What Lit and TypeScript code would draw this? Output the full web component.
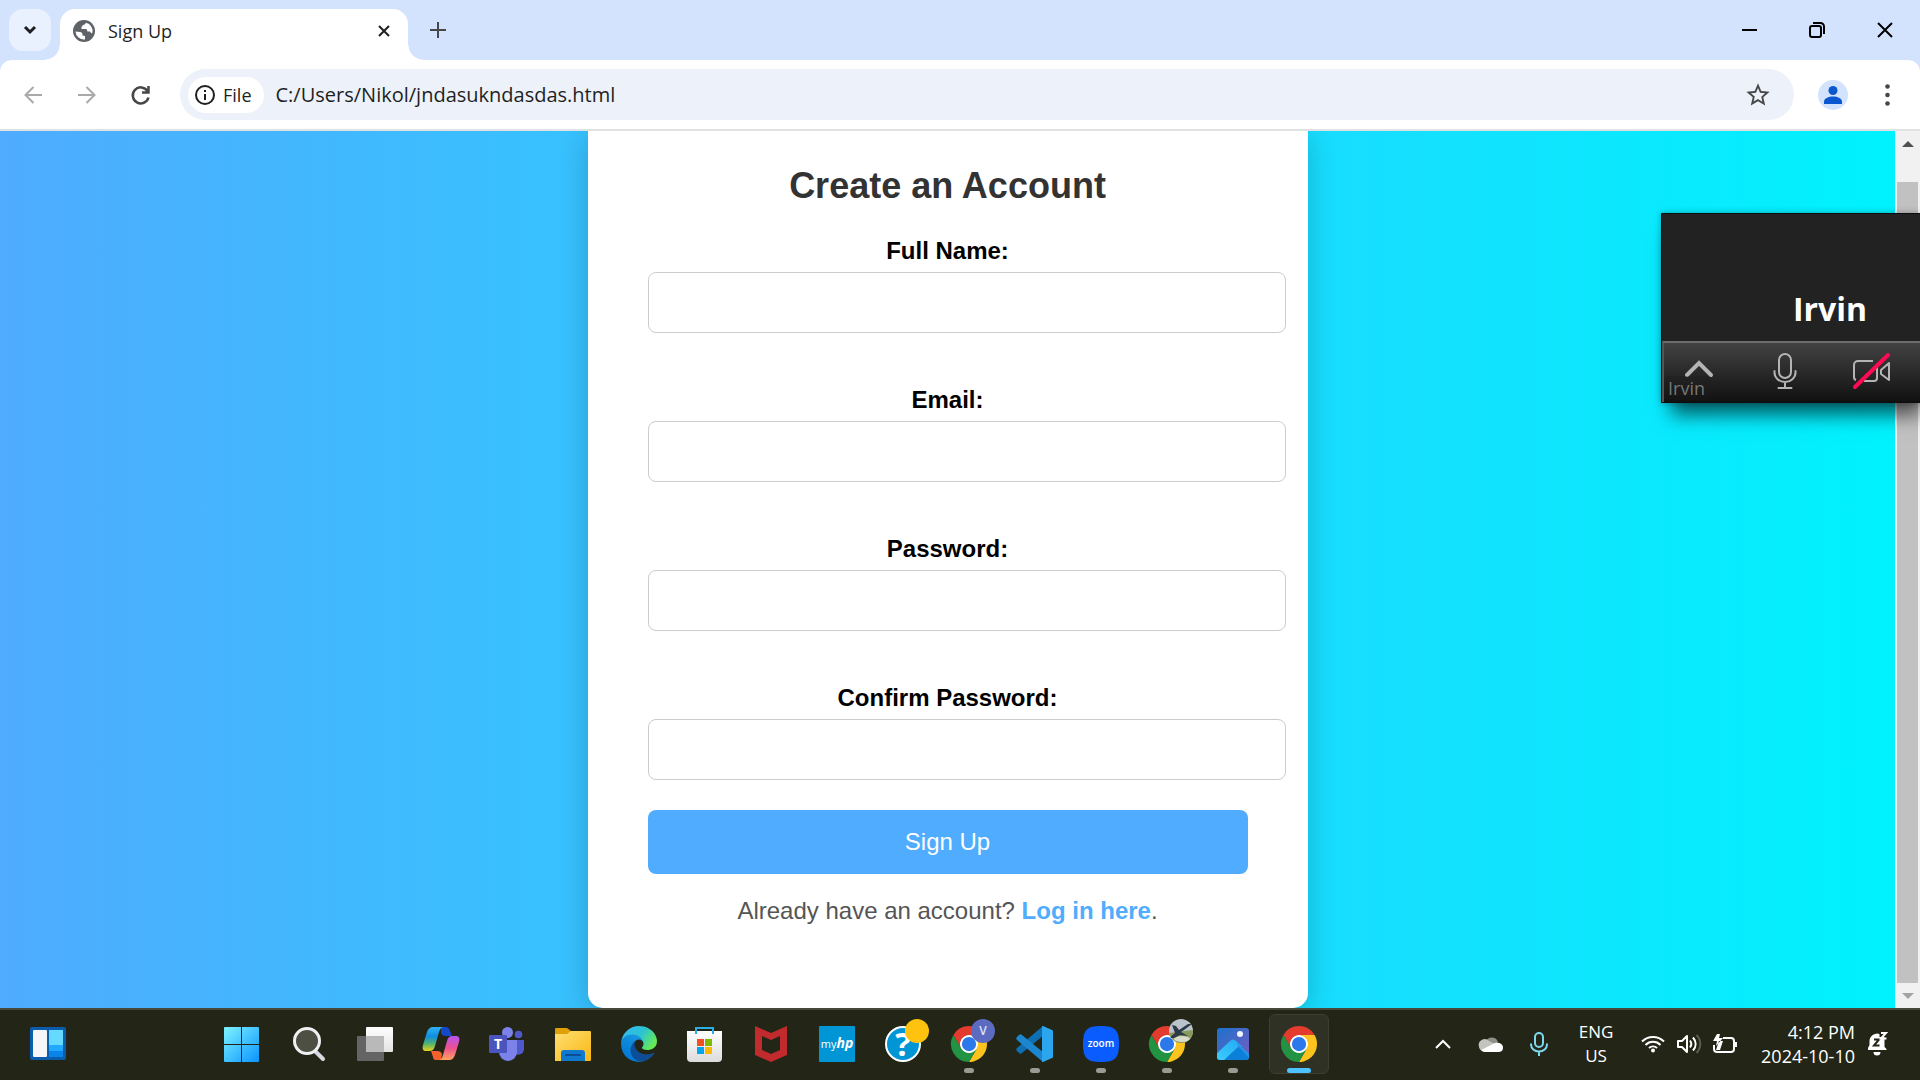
import { LitElement, html, svg, css, nothing, TemplateResult, SVGTemplateResult } from "lit";
import { customElement, property } from "lit/decorators.js";

const resetStyles = css`
  :host,
  *,
  *::before,
  *::after {
    box-sizing: border-box;
  }
  button {
    margin: 0;
    padding: 0;
    border: 0;
    background: none;
    color: inherit;
    font: inherit;
    display: flex;
    align-items: center;
    justify-content: center;
  }
  svg {
    display: block;
    flex: none;
    overflow: visible;
  }
`;

/* ---------- Browser frame: tab strip and toolbar ---------- */

@customElement("browser-frame")
export class BrowserFrame extends LitElement {
  @property() tabTitle = "";
  @property() address = "";

  static styles = [
    resetStyles,
    css`
      :host {
        display: block;
        background: #d3e3fd;
        color: #1f1f1f;
        font-family: "Open Sans", "Noto Sans", sans-serif;
        border-bottom: 2px solid #dfe1e2;
      }
      .strip {
        display: flex;
        height: 60px;
        padding: 9px 1px 0 9px;
      }
      .search-tabs {
        width: 42px;
        height: 42px;
        border-radius: 14px;
        background: #e9f0fe;
      }
      .tab {
        position: relative;
        display: flex;
        align-items: center;
        gap: 13px;
        width: 348px;
        margin-left: 9px;
        padding: 0 14px 8px 13px;
        border-radius: 15px 15px 0 0;
        background: #fff;
        font-size: 18px;
      }
      .tab::before,
      .tab::after {
        content: "";
        position: absolute;
        bottom: 0;
        width: 15px;
        height: 15px;
      }
      .tab::before {
        right: 100%;
        background: radial-gradient(circle at 0 0, transparent 14px, #fff 15px);
      }
      .tab::after {
        left: 100%;
        background: radial-gradient(circle at 100% 0, transparent 14px, #fff 15px);
      }
      .title {
        flex: 1;
        line-height: 26px;
      }
      .new-tab {
        width: 42px;
        height: 42px;
        margin-left: 9px;
      }
      .window {
        display: flex;
        margin: -9px 0 0 auto;
      }
      .window button {
        width: 68px;
        height: 59px;
      }
      .toolbar {
        display: flex;
        align-items: center;
        height: 69px;
        padding: 0 6px;
        border-radius: 12px 12px 0 0;
        background: #fff;
      }
      .nav {
        width: 54px;
        height: 42px;
        color: #474747;
      }
      .nav:disabled {
        color: #a9a9a9;
      }
      .omnibox {
        flex: 1;
        display: flex;
        align-items: center;
        height: 51px;
        margin: 0 12px;
        padding: 0 22px 0 8px;
        border-radius: 26px;
        background: #ecf1fa;
      }
      .chip {
        height: 36px;
        padding: 0 12px 0 7px;
        gap: 8px;
        border-radius: 18px;
        background: #fff;
        font-size: 18px;
        font-weight: 500;
      }
      .address {
        flex: 1;
        min-width: 0;
        height: 36px;
        margin-left: 12px;
        padding: 0;
        border: 0;
        outline: 0;
        background: none;
        color: #1f1f1f;
        font: 20px "Open Sans", "Noto Sans", sans-serif;
      }
      .profile {
        width: 54px;
        height: 42px;
      }
    `,
  ];

  render() {
    return html`
      <div class="strip">
        <button class="search-tabs" aria-label="Search tabs">
          <svg width="14" height="10" viewBox="0 0 14 10" fill="none" stroke="#1f1f1f" stroke-width="3">
            <path d="M2 2l5 5 5-5" />
          </svg>
        </button>
        <div class="tab">
          <svg width="22" height="22" viewBox="0 0 22 22">
            <circle cx="11" cy="11" r="11" fill="#5f6368" />
            <path
              d="M2.500 11.500L7 12c1.500 0 2.500 1 2.500 2.500v1l2.500.5v3.500a8.500 8.500 0 0 1-9.500-8z"
              fill="#fff"
            />
            <path
              d="M13 2.700c-.5 1.300-1.500 2-3 2.300L8.500 7v2h5l1 2.500H17l1.500 2 .8-.5A8.500 8.500 0 0 0 13 2.700z"
              fill="#fff"
            />
          </svg>
          <span class="title">${this.tabTitle}</span>
          <button aria-label="Close tab">
            <svg width="20" height="14" viewBox="0 0 20 14" fill="none" stroke="#1f1f1f" stroke-width="2">
              <path d="M5 2l10 10M15 2L5 12" />
            </svg>
          </button>
        </div>
        <button class="new-tab" aria-label="New tab">
          <svg width="16" height="16" viewBox="0 0 16 16" fill="none" stroke="#474747" stroke-width="2">
            <path d="M8 0v16M0 8h16" />
          </svg>
        </button>
        <div class="window">
          <button aria-label="Minimize">
            <svg width="15" height="2" viewBox="0 0 15 2"><path d="M0 0h15v2H0z" /></svg>
          </button>
          <button aria-label="Restore">
            <svg width="16" height="16" viewBox="0 0 16 16" fill="none" stroke="#000" stroke-width="2">
              <rect x="1" y="4" width="11" height="11" rx="2" />
              <path d="M4 1h7.500A3.500 3.500 0 0 1 15 4.500V12" />
            </svg>
          </button>
          <button aria-label="Close">
            <svg width="16" height="16" viewBox="0 0 16 16" fill="none" stroke="#000" stroke-width="2">
              <path d="M1 1l14 14M15 1L1 15" />
            </svg>
          </button>
        </div>
      </div>
      <div class="toolbar">
        <button class="nav" aria-label="Back" disabled>
          <svg width="18" height="18" viewBox="0 0 18 18" fill="none" stroke="currentColor" stroke-width="2">
            <path d="M18 9H2M9.500 1L1.500 9l8 8" />
          </svg>
        </button>
        <button class="nav" aria-label="Forward" disabled>
          <svg width="18" height="18" viewBox="0 0 18 18" fill="none" stroke="currentColor" stroke-width="2">
            <path d="M0 9h16M8.500 1l8 8-8 8" />
          </svg>
        </button>
        <button class="nav" aria-label="Reload">
          <svg width="20" height="20" viewBox="0 0 20 20" fill="none" stroke="currentColor" stroke-width="2.500">
            <path d="M17.500 12.500A8 8 0 1 1 16.500 6M17.500 1v6.500H11" />
          </svg>
        </button>
        <div class="omnibox">
          <button class="chip">
            <svg width="20" height="20" viewBox="0 0 20 20" fill="none" stroke="#1f1f1f" stroke-width="2">
              <circle cx="10" cy="10" r="9" />
              <path d="M10 9v6M10 5v2" />
            </svg>
            File
          </button>
          <input class="address" type="text" aria-label="Address" .value=${this.address} spellcheck="false" />
          <button aria-label="Bookmark this page">
            <svg width="28" height="28" viewBox="0 0 24 24" fill="#474747">
              <path
                d="M22 9.240l-7.190-.620L12 2 9.190 8.630 2 9.240l5.460 4.730L5.820 21 12 17.270 18.180 21l-1.630-7.030L22 9.240zM12 15.400l-3.760 2.270 1-4.280-3.320-2.880 4.380-.380L12 6.100l1.710 4.040 4.380.380-3.320 2.880 1 4.280L12 15.400z"
              />
            </svg>
          </button>
        </div>
        <button class="profile" aria-label="Profile">
          <svg width="30" height="30" viewBox="0 0 30 30">
            <circle cx="15" cy="15" r="15" fill="#d3e3fd" />
            <circle cx="15" cy="10.500" r="4.500" fill="#0b57d0" />
            <path d="M6 24v-2.500c0-3 4.500-5 9-5s9 2 9 5V24z" fill="#0b57d0" />
          </svg>
        </button>
        <button class="nav" aria-label="Menu">
          <svg width="5" height="22" viewBox="0 0 5 22" fill="#474747">
            <circle cx="2.500" cy="2.500" r="2.300" />
            <circle cx="2.500" cy="11" r="2.300" />
            <circle cx="2.500" cy="19.500" r="2.300" />
          </svg>
        </button>
      </div>
    `;
  }
}

/* ---------- Web page: the sign-up form ---------- */

interface Field {
  id: string;
  label: string;
  type: string;
}

const FIELDS: Field[] = [
  { id: "full-name", label: "Full Name:", type: "text" },
  { id: "email", label: "Email:", type: "email" },
  { id: "password", label: "Password:", type: "password" },
  { id: "confirm-password", label: "Confirm Password:", type: "password" },
];

@customElement("sign-up-page")
export class SignUpPage extends LitElement {
  static styles = [
    resetStyles,
    css`
      :host {
        display: flex;
        font-family: "Liberation Sans", Arial, sans-serif;
        font-size: 24px;
        line-height: 28px;
      }
      .view {
        flex: 1;
        display: flex;
        justify-content: center;
        overflow: hidden;
        background: linear-gradient(to right, #4facfe, #00f2fe);
      }
      .card {
        width: 720px;
        max-width: 100%;
        padding: 34px 60px 60px;
        border-radius: 0 0 15px 15px;
        background: #fff;
        box-shadow: 0 6px 30px rgba(0, 0, 0, 0.2);
        text-align: center;
      }
      h1 {
        margin: 0 0 30px;
        color: #333;
        font-size: 36px;
        line-height: 42px;
      }
      .fields {
        display: grid;
        gap: 53px;
      }
      .field {
        display: grid;
        gap: 7px;
      }
      label {
        color: #000;
        font-weight: bold;
      }
      .field input {
        width: calc(100% + 38px);
        height: 61px;
        padding: 0 18px;
        border: 1px solid #ccc;
        border-radius: 8px;
        outline: 0;
        background: #fff;
        font: inherit;
      }
      .submit {
        width: 100%;
        height: 64px;
        margin: 30px 0 23px;
        border-radius: 8px;
        background: #4facfe;
        color: #fff;
      }
      p {
        margin: 0;
        color: #555;
      }
      a {
        color: #4facfe;
        font-weight: bold;
        text-decoration: none;
      }
      .scrollbar {
        display: flex;
        flex-direction: column;
        align-items: center;
        width: 25px;
        background: #f1f1f1;
      }
      .scrollbar button {
        width: 25px;
        height: 25px;
      }
      .thumb {
        flex: 1;
        width: 21px;
        margin-top: 26px;
        background: #c1c1c1;
      }
    `,
  ];

  private renderField(f: Field): TemplateResult {
    return html`
      <div class="field">
        <label for=${f.id}>${f.label}</label>
        <input id=${f.id} type=${f.type} />
      </div>
    `;
  }

  render() {
    return html`
      <div class="view">
        <form class="card" @submit=${(e: Event) => e.preventDefault()}>
          <h1>Create an Account</h1>
          <div class="fields">${FIELDS.map((f) => this.renderField(f))}</div>
          <button class="submit" type="submit">Sign Up</button>
          <p>Already have an account? <a href="#login">Log in here</a>.</p>
        </form>
      </div>
      <div class="scrollbar">
        <button aria-label="Scroll up">
          <svg width="12" height="6" viewBox="0 0 12 6" fill="#505050"><path d="M0 6L6 0l6 6z" /></svg>
        </button>
        <div class="thumb"></div>
        <button aria-label="Scroll down">
          <svg width="12" height="6" viewBox="0 0 12 6" fill="#a3a3a3"><path d="M0 0l6 6 6-6z" /></svg>
        </button>
      </div>
    `;
  }
}

/* ---------- Floating call window ---------- */

@customElement("call-window")
export class CallWindow extends LitElement {
  @property() name = "";

  static styles = [
    resetStyles,
    css`
      :host {
        display: flex;
        flex-direction: column;
        width: 259px;
        height: 190px;
        background: #222;
        border: solid rgba(0, 0, 0, 0.6);
        border-width: 1px 0 1px 1px;
        box-shadow: 6px 16px 18px -4px rgba(0, 0, 0, 0.6), 0 0 6px rgba(0, 0, 0, 0.3);
        font-family: "Open Sans", "Noto Sans", sans-serif;
      }
      .speaker {
        flex: 1;
        display: flex;
        align-items: flex-end;
        justify-content: center;
        padding: 0 0 8px 78px;
        color: #fff;
        font-size: 32px;
        font-weight: bold;
        line-height: 48px;
      }
      .controls {
        position: relative;
        display: flex;
        align-items: center;
        gap: 38px;
        height: 61px;
        padding: 0 0 4px 11px;
        border-top: 2px solid #6c6c6c;
        border-left: 2px solid #555;
        background: linear-gradient(#424242, #101010);
        color: #b4b4b4;
      }
      .controls button {
        width: 48px;
      }
      .caption {
        position: absolute;
        left: 0;
        bottom: 2px;
        padding: 0 6px 0 4px;
        border-radius: 4px;
        background: rgba(30, 30, 30, 0.3);
        color: #777;
        font-size: 18px;
        line-height: 24px;
      }
    `,
  ];

  render() {
    return html`
      <div class="speaker">${this.name}</div>
      <div class="controls">
        <button aria-label="More">
          <svg width="28" height="20" viewBox="0 0 28 20" fill="none" stroke="currentColor" stroke-width="4" stroke-linecap="round">
            <path d="M2 14L14 2l12 12" />
          </svg>
        </button>
        <button aria-label="Mute">
          <svg width="24" height="36" viewBox="0 0 24 36" fill="none" stroke="currentColor" stroke-width="2" stroke-linecap="round">
            <rect x="6" y="1" width="12" height="24" rx="6" />
            <path d="M1.500 18v1.500a10.500 9.500 0 0 0 21 0V18M12 29v6M5.500 35h13" />
          </svg>
        </button>
        <button aria-label="Start video">
          <svg width="38" height="36" viewBox="0 0 38 36" fill="none" stroke="currentColor" stroke-width="2" stroke-linejoin="round">
            <path d="M4 27a3 3 0 0 1-2-3V12a4 4 0 0 1 4-4h15M25 14v11a3 3 0 0 1-3 3H12M37 10v17l-8-6v-4z" />
            <path d="M3 34L36 2" stroke="#ff0a54" stroke-width="4" stroke-linecap="round" />
          </svg>
        </button>
        <span class="caption">${this.name}</span>
      </div>
    `;
  }
}

/* ---------- Taskbar ---------- */

/* Every app icon is drawn on a 48 by 48 grid. */

const chromeLogo = svg`
  <g transform="translate(6 6) scale(.75)">
    <circle cx="24" cy="24" r="12.500" fill="#fff" />
    <path fill="#e33b2e" d="M24 12h20.780A24 24 0 0 0 3.210 12L13.610 30A12 12 0 0 1 24 12z" />
    <path fill="#fcc31e" d="M34.390 30L24 48A24 24 0 0 0 44.780 12H24A12 12 0 0 1 34.390 30z" />
    <path fill="#229342" d="M13.610 30L3.210 12A24 24 0 0 0 24 48l10.390-18A12 12 0 0 1 13.610 30z" />
    <circle cx="24" cy="24" r="9.500" fill="#2b78ea" />
  </g>`;

interface App {
  name: string;
  icon: SVGTemplateResult;
  state?: "running" | "active";
}

const WIDGETS = svg`
  <rect x="6" y="7" width="36" height="33" rx="2" fill="#0b5cad" />
  <rect x="9" y="10" width="14" height="27" rx="1" fill="#f6f6f6" />
  <rect x="25" y="10" width="14" height="15" fill="#66d9ff" />
  <rect x="25" y="25" width="14" height="6" fill="#21a9ff" />
  <rect x="25" y="31" width="14" height="6" fill="#0a84ea" />`;

const APPS: App[] = [
  {
    name: "Start",
    icon: svg`
      <linearGradient id="win" gradientUnits="userSpaceOnUse" x1="5" y1="7" x2="40" y2="42">
        <stop offset="0" stop-color="#7df3ff" /><stop offset="1" stop-color="#0a94ff" />
      </linearGradient>
      <path fill="url(#win)" d="M6 7h16v17H5V8a1 1 0 0 1 1-1zM23 7h16a1 1 0 0 1 1 1v16H23zM5 25h17v17H6a1 1 0 0 1-1-1zM23 25h17v16a1 1 0 0 1-1 1H23z" />`,
  },
  {
    name: "Search",
    icon: svg`
      <path d="M30 31l8 8" stroke="#d5d8de" stroke-width="4" stroke-linecap="round" />
      <circle cx="22" cy="21" r="12.500" fill="#4d4f42" stroke="#eef0f3" stroke-width="3" />`,
  },
  {
    name: "Task view",
    icon: svg`
      <linearGradient id="tv" x1="0" y1="0" x2="0" y2="1">
        <stop offset="0" stop-color="#fff" /><stop offset="1" stop-color="#e2e2e2" />
      </linearGradient>
      <rect x="6" y="16" width="27" height="25" rx="1" fill="#646464" />
      <rect x="15" y="7" width="27" height="25" rx="1" fill="url(#tv)" />
      <path d="M15 16h18v16H15z" fill="#b9b9b9" />`,
  },
  {
    name: "Copilot",
    icon: svg`
      <linearGradient id="cp1" x1="0" y1="0" x2="0" y2="1">
        <stop offset="0" stop-color="#2eb2f5" /><stop offset=".4" stop-color="#0f8de0" />
        <stop offset=".7" stop-color="#52b56c" /><stop offset="1" stop-color="#ecd11c" />
      </linearGradient>
      <linearGradient id="cp2" x1="0" y1="0" x2="0" y2="1">
        <stop offset="0" stop-color="#b455f0" /><stop offset=".5" stop-color="#ee5090" />
        <stop offset="1" stop-color="#ffa35e" />
      </linearGradient>
      <path d="M24 7h5c2 0 3 1 4 4l2 5h-6c-3 0-4-1-5-3z" fill="#1548c8" />
      <path d="M24 40h-5c-2 0-3-1-3-3l-2-6h6c3 0 4 1 5 3z" fill="#f4622c" />
      <path d="M16 7h11c-3 0-4 2-5 5l-4 14c-1 4-3 5-6 5H9c-3 0-4-2-3-6l4-13c1-3 3-5 6-5z" fill="url(#cp1)" />
      <path d="M32 40H21c3 0 4-2 5-5l4-14c1-4 3-5 6-5h3c3 0 4 2 3 6l-4 13c-1 3-3 5-6 5z" fill="url(#cp2)" />`,
  },
  {
    name: "Teams",
    icon: svg`
      <circle cx="35.500" cy="14.500" r="3.800" fill="#5059c9" />
      <path d="M32 20h9v9a6 6 0 0 1-9 5z" fill="#5059c9" />
      <circle cx="24.500" cy="12.500" r="5.500" fill="#7b83eb" />
      <path d="M16 20h18v12a9 9 0 0 1-18 0z" fill="#7b83eb" />
      <rect x="6" y="15" width="18" height="18" rx="1" fill="#4b53bc" />
      <text x="15" y="29" text-anchor="middle" font-size="14" font-weight="bold" fill="#fff">T</text>`,
  },
  {
    name: "File Explorer",
    icon: svg`
      <linearGradient id="fe" x1="0" y1="0" x2="1" y2="1">
        <stop offset="0" stop-color="#ffdf75" /><stop offset="1" stop-color="#f8b711" />
      </linearGradient>
      <path d="M6 9a1 1 0 0 1 1-1h11l4 3v6H6z" fill="#e0a008" />
      <path d="M6 14h12l4-3h19a1 1 0 0 1 1 1v28a1 1 0 0 1-1 1H6z" fill="url(#fe)" />
      <path d="M12 41v-8a3 3 0 0 1 3-3h18a3 3 0 0 1 3 3v8z" fill="#0f78cf" />
      <path d="M17 35h14" stroke="#0a4f96" stroke-width="2" stroke-linecap="round" />`,
  },
  {
    name: "Edge",
    icon: svg`
      <linearGradient id="ed1" x1="0" y1="0" x2="1" y2="0">
        <stop offset="0" stop-color="#0a4f9c" /><stop offset="1" stop-color="#124c8c" />
      </linearGradient>
      <linearGradient id="ed2" x1=".8" y1="0" x2=".3" y2="1">
        <stop offset="0" stop-color="#1b9de2" /><stop offset=".6" stop-color="#0a82d8" />
        <stop offset="1" stop-color="#0078d4" />
      </linearGradient>
      <linearGradient id="ed3" x1="0" y1=".2" x2="1" y2=".7">
        <stop offset="0" stop-color="#35b8f1" /><stop offset=".5" stop-color="#2bc3d2" />
        <stop offset=".95" stop-color="#66eb55" />
      </linearGradient>
      <g transform="translate(6 6) scale(.1406)">
        <path fill="url(#ed1)" d="M231 190.500c-3.400 1.800-6.900 3.400-10.500 4.700a101.900 101.900 0 0 1-35.900 6.400c-47.300 0-88.500-32.500-88.500-74.300a31.500 31.500 0 0 1 16.400-27.300c-42.800 1.800-53.800 46.400-53.800 72.500 0 74 68.100 81.400 82.800 81.400 7.900 0 19.800-2.300 27-4.600l1.300-.4a128.300 128.300 0 0 0 66.600-52.800 4 4 0 0 0-5.400-5.600z" />
        <path fill="url(#ed2)" d="M105.700 241.400a79.200 79.200 0 0 1-22.700-21.300 80.700 80.700 0 0 1 29.500-120c3.200-1.500 8.500-4.100 15.600-4a32.400 32.400 0 0 1 25.700 13 31.900 31.900 0 0 1 6.300 18.700c0-.2 24.500-79.600-80-79.600-43.900 0-80 41.600-80 78.200a130.200 130.200 0 0 0 12.100 56 128 128 0 0 0 156.400 67 75.500 75.500 0 0 1-62.800-8z" />
        <path fill="url(#ed3)" d="M152.300 148.900c-.9 1-3.400 2.500-3.400 5.600 0 2.600 1.700 5.200 4.800 7.300 14.300 10 41.400 8.600 41.500 8.600a59.600 59.600 0 0 0 30.300-8.300 61.400 61.400 0 0 0 30.400-52.900c.3-22.400-8-37.300-11.300-43.900C223.500 23.900 177.700 0 128 0A128 128 0 0 0 0 126.200c.5-36.500 36.800-66 80-66 3.500 0 23.500.3 42 10a72.600 72.600 0 0 1 30.900 29.300c6.100 10.600 7.200 24.100 7.200 29.500s-2.700 13.300-7.800 19.900z" />
      </g>`,
  },
  {
    name: "Microsoft Store",
    icon: svg`
      <linearGradient id="ms" x1="0" y1="0" x2="0" y2="1">
        <stop offset="0" stop-color="#fff" /><stop offset="1" stop-color="#dcdcdc" />
      </linearGradient>
      <path d="M6 11h35v27a4 4 0 0 1-4 4H10a4 4 0 0 1-4-4z" fill="url(#ms)" />
      <path d="M15 14V8h17v6" fill="none" stroke="#27aee6" stroke-width="2" />
      <path d="M16 19h7v7h-7z" fill="#f25022" />
      <path d="M24 19h7v7h-7z" fill="#7fba00" />
      <path d="M16 27h7v7h-7z" fill="#00a4ef" />
      <path d="M24 27h7v7h-7z" fill="#ffb900" />`,
  },
  {
    name: "McAfee",
    icon: svg`<path fill="#c12b2d" fill-rule="evenodd" d="M8 6l16 7 16-7v29l-16 7-16-7zM15 16v14l9 4 9-4V16l-9 4z" />`,
  },
  {
    name: "myHP",
    icon: svg`
      <rect x="6" y="6" width="36" height="36" rx="1" fill="#0096d6" />
      <text x="24" y="28" text-anchor="middle" font-size="11" fill="#fff">my<tspan font-style="italic" font-weight="bold" font-size="14">hp</tspan></text>`,
  },
  {
    name: "HP Support Assistant",
    icon: svg`
      <circle cx="24" cy="24" r="17" fill="#0096d6" stroke="#fff" stroke-width="2" />
      <text x="24" y="36" text-anchor="middle" font-size="33" font-weight="bold" fill="#fff">?</text>
      <circle cx="38" cy="11" r="12" fill="#ffc20e" />`,
  },
  {
    name: "Chrome, profile V",
    state: "running",
    icon: svg`
      ${chromeLogo}
      <circle cx="38" cy="11" r="12" fill="#5c6bc0" />
      <text x="38" y="15" text-anchor="middle" font-size="12" font-weight="600" fill="#dfe3f6">V</text>`,
  },
  {
    name: "Visual Studio Code",
    state: "running",
    icon: svg`
      <path d="M32 6l1 9L11 33c-1 1-2 1-3 0l-2-2c-1-1-1-2 0-3z" fill="#0f6fb3" />
      <path d="M32 42l1-9L11 15c-1-1-2-1-3 0l-2 2c-1 1-1 2 0 3z" fill="#1c86cf" />
      <path d="M32 6l9 4c1 0 1 1 1 2v24c0 1 0 2-1 2l-9 4c-1 0-1 0-1-1V7c0-1 0-1 1-1z" fill="#2ba5ee" />`,
  },
  {
    name: "Zoom",
    state: "running",
    icon: svg`
      <path d="M24 6c14 0 18 4 18 18s-4 18-18 18S6 38 6 24 10 6 24 6z" fill="#0b5cff" />
      <text x="24" y="27" text-anchor="middle" font-size="10" font-weight="600" fill="#fff">zoom</text>`,
  },
  {
    name: "Chrome, second profile",
    state: "running",
    icon: svg`
      ${chromeLogo}
      <clipPath id="ph"><circle cx="38" cy="11" r="12" /></clipPath>
      <g clip-path="url(#ph)">
        <path d="M26-1h24v24H26z" fill="#b9c3c9" />
        <path d="M26 13l24-3v13H26z" fill="#8a9a5b" />
        <ellipse cx="39" cy="19" rx="8" ry="3" fill="#d9dccb" />
        <path d="M29 5l4 1 3 4 9-6 4 0-8 6-3 2 7 4-8-1-6 3-5 0 6-5z" fill="#2c3a4a" />
      </g>`,
  },
  {
    name: "Photos",
    state: "running",
    icon: svg`
      <linearGradient id="p1" x1="0" y1="0" x2="1" y2="1">
        <stop offset="0" stop-color="#1a72cd" /><stop offset="1" stop-color="#7a5cc0" />
      </linearGradient>
      <linearGradient id="p2" x1="0" y1="1" x2="1" y2="0">
        <stop offset="0" stop-color="#3fd0ff" /><stop offset="1" stop-color="#22a7f2" />
      </linearGradient>
      <clipPath id="pc"><rect x="8" y="8" width="32" height="32" rx="3" /></clipPath>
      <g clip-path="url(#pc)">
        <path d="M8 8h32v32H8z" fill="url(#p1)" />
        <path d="M14 42l13-16 15 10v6z" fill="#0c7fd8" />
        <path d="M5 36l16-15c2-2 4-2 6 0l7 6-4-1-16 15H5z" fill="url(#p2)" />
        <path d="M27 21l14 14v4L30 27z" fill="#2196e8" />
        <circle cx="31" cy="14" r="3" fill="#f3f6fb" />
      </g>`,
  },
  { name: "Chrome", state: "active", icon: chromeLogo },
];

@customElement("task-bar")
export class TaskBar extends LitElement {
  static styles = [
    resetStyles,
    css`
      :host {
        display: flex;
        align-items: stretch;
        height: 72px;
        border-top: 2px solid #46483a;
        background: #232616;
        color: #fff;
        font-family: "Open Sans", "Noto Sans", sans-serif;
        font-size: 17px;
        line-height: 24px;
      }
      .widgets {
        width: 96px;
      }
      .apps {
        display: flex;
        margin: 0 auto 0 114px;
      }
      .apps button {
        position: relative;
        width: 66px;
      }
      .apps svg,
      .widgets svg {
        position: relative;
        margin-bottom: 2px;
      }
      .active::before {
        content: "";
        position: absolute;
        inset: 4px 3px 6px;
        border: 1px solid #3c3f31;
        border-radius: 6px;
        background: #2e3123;
      }
      .running::after,
      .active::after {
        content: "";
        position: absolute;
        bottom: 7px;
        left: calc(50% - 5px);
        width: 10px;
        height: 5px;
        border-radius: 3px;
        background: #9a9b93;
      }
      .active::after {
        left: calc(50% - 12px);
        width: 24px;
        background: #4cc2ff;
      }
      .tray {
        display: flex;
        align-items: center;
        padding: 0 19px 2px 0;
      }
      .item {
        width: 48px;
        height: 100%;
      }
      .lang {
        width: 66px;
        height: 100%;
        text-align: center;
      }
      .quick {
        gap: 12px;
        width: 120px;
        height: 100%;
      }
      .clock {
        display: block;
        width: 106px;
        font-size: 18px;
        text-align: right;
      }
      .bell {
        width: 46px;
        height: 100%;
      }
    `,
  ];

  private icon(content: SVGTemplateResult): TemplateResult {
    return html`<svg width="48" height="48" viewBox="0 0 48 48">${content}</svg>`;
  }

  render() {
    return html`
      <button class="widgets" aria-label="Widgets">${this.icon(WIDGETS)}</button>
      <nav class="apps">
        ${APPS.map(
          (a) => html`<button class=${a.state ?? nothing} aria-label=${a.name}>${this.icon(a.icon)}</button>`
        )}
      </nav>
      <div class="tray">
        <button class="item" aria-label="Show hidden icons">
          <svg width="16" height="10" viewBox="0 0 16 10" fill="none" stroke="#fff" stroke-width="2"><path d="M1 9l7-7 7 7" /></svg>
        </button>
        <button class="item" aria-label="OneDrive">
          <svg width="24" height="16" viewBox="0 0 24 16">
            <path d="M7 5a6.500 6.500 0 0 1 12 1l-5 5z" fill="#8f908a" />
            <path d="M0 11a6 6 0 0 1 10-6l8 4-6 6H5a5 5 0 0 1-5-4z" fill="#c3c4c0" />
            <path d="M2 14l14-7c4-1 8 1 8 4.500S22 16 19 16H5a5 5 0 0 1-3-2z" fill="#fff" />
          </svg>
        </button>
        <button class="item" aria-label="Microphone in use">
          <svg width="18" height="24" viewBox="0 0 18 24" fill="none" stroke="#7bd8ee" stroke-width="2">
            <rect x="5" y="1" width="8" height="14" rx="4" />
            <path d="M1 11.500v1a8 7 0 0 0 16 0v-1M9 19.500V24" />
          </svg>
        </button>
        <button class="lang" aria-label="Input language">ENG<br />US</button>
        <button class="quick" aria-label="Network, volume and battery">
          <svg width="24" height="18" viewBox="0 0 24 18" fill="none" stroke="#fff" stroke-width="2">
            <path d="M1 6.500a15.500 15.500 0 0 1 22 0M4.500 10a10.500 10.500 0 0 1 15 0M8 13a6 6 0 0 1 8 0" />
            <circle cx="12" cy="15.500" r="2" fill="#fff" stroke="none" />
          </svg>
          <svg width="24" height="20" viewBox="0 0 24 20" fill="none" stroke="#fff" stroke-width="2">
            <path d="M1 7h4l5-5v16l-5-5H1z" stroke-linejoin="round" />
            <path d="M13 6.500c1.500 2 1.500 5 0 7M16 3.500c3.500 4 3.500 9 0 13" />
            <path d="M19.500 1c5 5 5 13 0 18" stroke="#5a5c50" />
          </svg>
          <svg width="24" height="20" viewBox="0 0 24 20" fill="none" stroke="#fff" stroke-width="2">
            <path d="M10 4h8a3 3 0 0 1 3 3v8a3 3 0 0 1-3 3H4a3 3 0 0 1-3-3v-4" />
            <path d="M3 16h4l3-9H6zM4 0h3L6 4h4L3 12l1-5H0zM22 8h2v5h-2z" fill="#fff" stroke="none" />
          </svg>
        </button>
        <time class="clock" datetime="2024-10-10T16:12">4:12 PM<br />2024-10-10</time>
        <button class="bell" aria-label="Notifications">
          <svg width="22" height="24" viewBox="0 0 22 24">
            <path d="M1 18v-2l1.500-3V9a7.500 7.500 0 0 1 10-7v3h5v10l2 2v1zM6.500 20h7a3.500 3.500 0 0 1-7 0z" fill="#fff" />
            <path d="M7 7.500h5l-5 6h5.500" fill="none" stroke="#232616" stroke-width="2" />
            <path d="M14 1h5l-5 5.500h5.500" fill="none" stroke="#fff" stroke-width="2" />
          </svg>
        </button>
      </div>
    `;
  }
}

/* ---------- Desktop ---------- */

@customElement("app-root")
export class AppRoot extends LitElement {
  static styles = css`
    :host {
      position: relative;
      display: flex;
      flex-direction: column;
      min-height: 100vh;
      overflow: hidden;
    }
    sign-up-page {
      flex: 1;
    }
    call-window {
      position: absolute;
      top: 213px;
      right: 0;
    }
  `;

  render() {
    return html`
      <browser-frame tabTitle="Sign Up" address="C:/Users/Nikol/jndasukndasdas.html"></browser-frame>
      <sign-up-page></sign-up-page>
      <task-bar></task-bar>
      <call-window name="Irvin"></call-window>
    `;
  }
}
